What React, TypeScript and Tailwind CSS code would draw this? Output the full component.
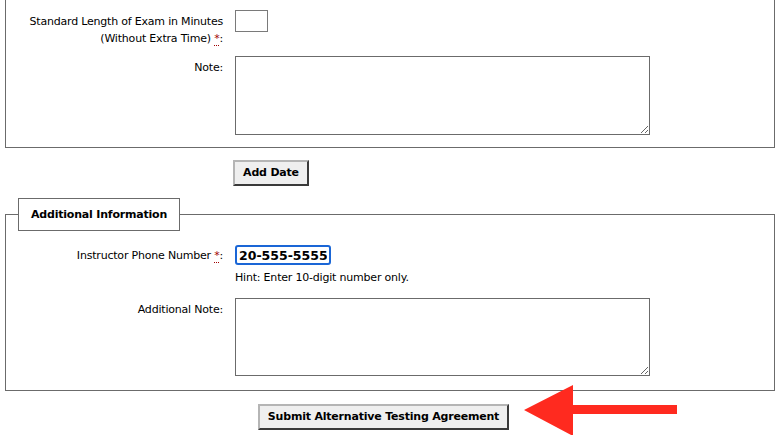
import React from 'react'

function Req() {
  return (
    <abbr
      title="required"
      className="text-[#a00000] no-underline border-b border-dotted border-[#a00000]"
    >
      *
    </abbr>
  )
}

const btn =
  'bg-[#efefef] text-black font-bold text-[11px] tracking-[-0.2px] border-2 border-t-[#b5b5b5] border-l-[#b5b5b5] border-r-[#3a3a3a] border-b-[#3a3a3a]'

export default function App() {
  return (
    <div className="w-[779px] h-[435px] overflow-hidden bg-white text-[11px] tracking-[-0.2px] text-black font-['DejaVu_Sans',sans-serif]">
      {/* exam details, top cut off */}
      <div className="ml-[5px] w-[770px] border-x border-b border-[#6b6b6b] pt-[10px] pb-[12px]">
        <div className="grid grid-cols-[217px_1fr] gap-x-[12px] gap-y-[9px]">
          <div className="text-right leading-[17px] pt-[3px]">
            Standard Length of Exam in Minutes
            <br />
            (Without Extra Time) <Req />:
          </div>
          <div>
            <input className="block w-[33px] h-[22px] border border-[#7a7a7a]" />
          </div>
          <div className="text-right leading-[17px] pt-[3px]">Note:</div>
          <div>
            <textarea className="block w-[415px] h-[79px] border border-[#6b6b6b] resize" />
          </div>
        </div>
      </div>

      <div className="pl-[233px] pt-[12px]">
        <button className={`${btn} w-[76px] h-[26px]`}>Add Date</button>
      </div>

      {/* additional information */}
      <fieldset className="ml-[5px] mt-[12px] w-[770px] border border-[#6b6b6b] px-0 pt-[14px] pb-[14px]">
        <legend className="ml-[12px] px-[12px] h-[33px] border border-[#6b6b6b] font-bold leading-[31px]">
          Additional Information
        </legend>
        <div className="grid grid-cols-[217px_1fr] gap-x-[12px]">
          <div className="text-right leading-[17px] pt-[2px]">
            Instructor Phone Number <Req />:
          </div>
          <div>
            <input
              defaultValue="20-555-5555"
              className="block w-[96px] h-[20px] border-2 border-[#1a66d6] rounded-[3px] px-[2px] font-bold text-[12.5px] tracking-normal leading-none outline-none"
            />
            <div className="mt-[4px] leading-[17px]">Hint: Enter 10-digit number only.</div>
          </div>
          <div className="text-right leading-[17px] pt-[3px] mt-[12px]">Additional Note:</div>
          <div className="mt-[12px]">
            <textarea className="block w-[415px] h-[78px] border border-[#6b6b6b] resize" />
          </div>
        </div>
      </fieldset>

      <div className="flex items-start pl-[258px] pt-[13px]">
        <button className={`${btn} w-[251px] h-[26px]`}>
          Submit Alternative Testing Agreement
        </button>
        <svg width="160" height="54" viewBox="0 0 160 54" className="ml-[13px] -mt-[20px]">
          <polygon
            points="2,26 51,1 51,21 155,21 155,30 51,30 51,52"
            fill="#ff2a1f"
          />
        </svg>
      </div>
    </div>
  )
}
